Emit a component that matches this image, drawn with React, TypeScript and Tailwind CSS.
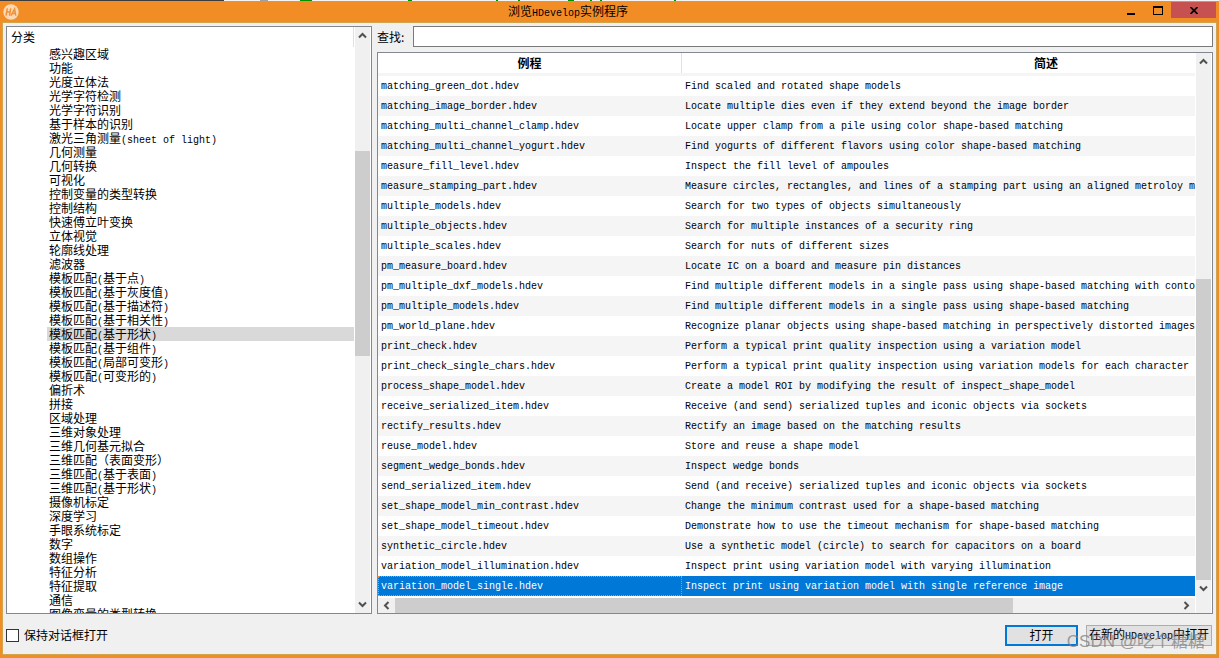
import { Fragment } from "react";
import type { ReactNode } from "react";

const categories = [
  "感兴趣区域", "功能", "光度立体法", "光学字符检测", "光学字符识别", "基于样本的识别",
  "激光三角测量(sheet of light)", "几何测量", "几何转换", "可视化", "控制变量的类型转换",
  "控制结构", "快速傅立叶变换", "立体视觉", "轮廓线处理", "滤波器", "模板匹配(基于点)",
  "模板匹配(基于灰度值)", "模板匹配(基于描述符)", "模板匹配(基于相关性)", "模板匹配(基于形状)",
  "模板匹配(基于组件)", "模板匹配(局部可变形)", "模板匹配(可变形的)", "偏折术", "拼接",
  "区域处理", "三维对象处理", "三维几何基元拟合", "三维匹配（表面变形）", "三维匹配(基于表面)",
  "三维匹配(基于形状)", "摄像机标定", "深度学习", "手眼系统标定", "数字", "数组操作",
  "特征分析", "特征提取", "通信", "图像变量的类型转换",
];
const selectedCategory = "模板匹配(基于形状)";

const examples: [string, string][] = [
  ["matching_green_dot.hdev", "Find scaled and rotated shape models"],
  ["matching_image_border.hdev", "Locate multiple dies even if they extend beyond the image border"],
  ["matching_multi_channel_clamp.hdev", "Locate upper clamp from a pile using color shape-based matching"],
  ["matching_multi_channel_yogurt.hdev", "Find yogurts of different flavors using color shape-based matching"],
  ["measure_fill_level.hdev", "Inspect the fill level of ampoules"],
  ["measure_stamping_part.hdev", "Measure circles, rectangles, and lines of a stamping part using an aligned metroloy model"],
  ["multiple_models.hdev", "Search for two types of objects simultaneously"],
  ["multiple_objects.hdev", "Search for multiple instances of a security ring"],
  ["multiple_scales.hdev", "Search for nuts of different sizes"],
  ["pm_measure_board.hdev", "Locate IC on a board and measure pin distances"],
  ["pm_multiple_dxf_models.hdev", "Find multiple different models in a single pass using shape-based matching with contours"],
  ["pm_multiple_models.hdev", "Find multiple different models in a single pass using shape-based matching"],
  ["pm_world_plane.hdev", "Recognize planar objects using shape-based matching in perspectively distorted images"],
  ["print_check.hdev", "Perform a typical print quality inspection using a variation model"],
  ["print_check_single_chars.hdev", "Perform a typical print quality inspection using variation models for each character"],
  ["process_shape_model.hdev", "Create a model ROI by modifying the result of inspect_shape_model"],
  ["receive_serialized_item.hdev", "Receive (and send) serialized tuples and iconic objects via sockets"],
  ["rectify_results.hdev", "Rectify an image based on the matching results"],
  ["reuse_model.hdev", "Store and reuse a shape model"],
  ["segment_wedge_bonds.hdev", "Inspect wedge bonds"],
  ["send_serialized_item.hdev", "Send (and receive) serialized tuples and iconic objects via sockets"],
  ["set_shape_model_min_contrast.hdev", "Change the minimum contrast used for a shape-based matching"],
  ["set_shape_model_timeout.hdev", "Demonstrate how to use the timeout mechanism for shape-based matching"],
  ["synthetic_circle.hdev", "Use a synthetic model (circle) to search for capacitors on a board"],
  ["variation_model_illumination.hdev", "Inspect print using variation model with varying illumination"],
  ["variation_model_single.hdev", "Inspect print using variation model with single reference image"],
];
const selectedExample = "variation_model_single.hdev";

/* Latin runs are set in the half-width monospace face, the rest in the CJK face. */
function Mixed({ text }: { text: string }) {
  const runs = text.split(/([\x20-\x7e]+)/).filter(Boolean);
  return (
    <>
      {runs.map((run, i) =>
        /^[\x20-\x7e]/.test(run) ? (
          <span key={i} className="font-['Liberation_Mono',monospace] text-[10px]">{run}</span>
        ) : (
          <Fragment key={i}>{run}</Fragment>
        ),
      )}
    </>
  );
}

const chevrons = {
  up: "M1 6.5 4.5 3 8 6.5",
  down: "M1 2.5 4.5 6 8 2.5",
  left: "M6.5 1 3 4.5 6.5 8",
  right: "M2.5 1 6 4.5 2.5 8",
};

function ArrowButton({ dir, label }: { dir: keyof typeof chevrons; label: string }) {
  return (
    <button type="button" aria-label={label} className="flex size-[17px] shrink-0 items-center justify-center">
      <svg viewBox="0 0 9 9" className="size-[9px]" fill="none" stroke="#505050" strokeWidth="2">
        <path d={chevrons[dir]} />
      </svg>
    </button>
  );
}

function WindowButton({ label, className, children }: { label: string; className: string; children: ReactNode }) {
  return (
    <button type="button" aria-label={label} className={className}>
      {children}
    </button>
  );
}

export default function App() {
  return (
    <div className="flex h-screen flex-col overflow-hidden bg-[#f28d25] font-['Noto_Sans_CJK_SC',sans-serif] text-[12px] leading-[14px] text-black">
      <div className="flex h-px shrink-0 bg-[#f4f4f4]">
        <div className="w-56 bg-[#3c3c3c]" />
        <div className="ml-9 w-2 bg-[#a0a0a0]" />
        <div className="ml-8 w-3 bg-[#009000]" />
        <div className="ml-24 w-1 bg-[#009000]" />
        <div className="ml-[84px] w-[2px] bg-[#009000]" />
        <div className="ml-5 w-[2px] bg-[#009000]" />
        <div className="ml-12 w-[6px] bg-[#009000]" />
        <div className="ml-4 w-[2px] bg-[#009000]" />
        <div className="ml-2 w-[2px] bg-[#009000]" />
        <div className="ml-[72px] w-[2px] bg-[#009000]" />
      </div>

      <header className="flex h-[21px] shrink-0 items-start border-t border-[#d49a3c] pr-[3px] pl-[3px]">
        <svg viewBox="0 0 16 16" className="size-4 self-center" aria-label="HALCON">
          <circle cx="8" cy="8" r="7.7" fill="#fbd9b4" />
          <path d="M4.3 4.4 3.1 11.6M7.7 4.4 6.5 11.6M3.4 8h3.8M8 11.6 11.6 5l1.2 6.6M9.4 9.6h3.2" fill="none" stroke="#f0913a" strokeWidth="1.5" />
        </svg>
        <h1 className="flex-1 self-center text-center"><Mixed text="浏览HDevelop实例程序" /></h1>
        <div className="flex">
          <WindowButton label="最小化" className="flex h-4 w-7 items-center justify-center">
            <svg viewBox="0 0 10 10" className="size-[10px]"><path d="M1 8h8v2H1z" /></svg>
          </WindowButton>
          <WindowButton label="最大化" className="flex h-4 w-[26px] items-center justify-center">
            <svg viewBox="0 0 10 9" className="h-[9px] w-[10px]"><path d="M0 0h10v9H0zM1 2v6h8V2z" fillRule="evenodd" /></svg>
          </WindowButton>
          <WindowButton label="关闭" className="flex h-4 w-[45px] items-center justify-center bg-[#c75050]">
            <svg viewBox="0 0 8 7" className="h-[7px] w-2" fill="none" stroke="#000" strokeWidth="1.7"><path d="m.5 0 7 7m0-7-7 7" /></svg>
          </WindowButton>
        </div>
      </header>

      <main className="mx-[2px] mb-[3px] flex min-h-0 flex-1 flex-col border border-[#d2a44c] bg-[#f0f0f0] px-[3px] pt-[3px]">
        <div className="flex min-h-0 flex-1 gap-[5px]">
          <nav className="flex w-[366px] shrink-0 border border-[#828790] bg-white" aria-label="分类">
            <div className="flex min-w-0 flex-1 flex-col">
              <h2 className="h-5 shrink-0 border-r border-[#e0e0e0] pt-[3px] pl-1">分类</h2>
              <ul className="ml-10 min-h-0 flex-1 overflow-hidden">
                {categories.map((name) => (
                  <li
                    key={name}
                    className={
                      name === selectedCategory
                        ? "h-[14px] bg-[#d9d9d9] pl-[2px] whitespace-nowrap"
                        : "h-[14px] pl-[2px] whitespace-nowrap"
                    }
                  >
                    <Mixed text={name} />
                  </li>
                ))}
              </ul>
            </div>
            <div className="mx-px flex w-[15px] shrink-0 flex-col items-center bg-[#f0f0f0]">
              <ArrowButton dir="up" label="向上滚动" />
              <div className="flex-[107]" />
              <div className="w-full flex-[204] bg-[#cdcdcd]" />
              <div className="flex-[240]" />
              <ArrowButton dir="down" label="向下滚动" />
            </div>
          </nav>

          <section className="flex min-w-0 flex-1 flex-col gap-[5px]">
            <div className="flex h-[21px] shrink-0 items-center">
              <label htmlFor="search" className="w-9 shrink-0">查找:</label>
              <input id="search" type="text" className="h-[21px] min-w-0 flex-1 border border-[#7a7a7a] bg-white px-1 outline-none" />
            </div>

            <div className="flex min-h-0 flex-1 border border-[#828790] bg-white">
              <div className="flex min-w-0 flex-1 flex-col">
                <div className="min-h-0 flex-1 overflow-hidden">
                  <table className="w-[1032px] table-fixed border-collapse">
                    <colgroup>
                      <col className="w-[304px]" />
                      <col />
                    </colgroup>
                    <thead>
                      <tr className="bg-[#f5f5f5]">
                        <th className="p-0 pb-[3px] font-bold">
                          <div className="h-5 border-r border-[#e0e0e0] bg-white leading-5">例程</div>
                        </th>
                        <th className="p-0 pb-[3px] font-bold">
                          <div className="h-5 bg-white leading-5">简述</div>
                        </th>
                      </tr>
                    </thead>
                    <tbody className="font-['Liberation_Mono',monospace] text-[10px]">
                      {examples.map(([file, description]) => {
                        const selected = file === selectedExample;
                        return (
                          <tr
                            key={file}
                            className={selected ? "h-5 bg-[#0078d7] text-white" : "h-5 even:bg-[#f5f5f5]"}
                          >
                            <td className="p-0 whitespace-nowrap">
                              <div
                                className={
                                  selected
                                    ? "h-5 border border-dotted border-[#ff8728] pt-[3px] pl-[2px]"
                                    : "h-5 border border-transparent pt-[3px] pl-[2px]"
                                }
                              >
                                {file}
                              </div>
                            </td>
                            <td className="p-0 pt-[2px] pl-[3px] whitespace-nowrap">{description}</td>
                          </tr>
                        );
                      })}
                    </tbody>
                  </table>
                </div>
                <div className="mt-px flex h-[15px] shrink-0 items-center bg-[#f0f0f0]">
                  <ArrowButton dir="left" label="向左滚动" />
                  <div className="h-full flex-[618] bg-[#cdcdcd]" />
                  <div className="flex-[165]" />
                  <ArrowButton dir="right" label="向右滚动" />
                </div>
              </div>
              <div className="mx-px flex w-[15px] shrink-0 flex-col items-center bg-[#f0f0f0] pb-4">
                <ArrowButton dir="up" label="向上滚动" />
                <div className="flex-[209]" />
                <div className="w-full flex-[300] bg-[#cdcdcd]" />
                <ArrowButton dir="down" label="向下滚动" />
              </div>
            </div>
          </section>
        </div>

        <footer className="relative flex h-10 shrink-0 items-center gap-2 pt-[2px] pr-px">
          <label className="mr-auto flex items-center gap-[5px]">
            <input type="checkbox" className="size-[13px] appearance-none border border-[#333] bg-white" />
            保持对话框打开
          </label>
          <button type="button" className="h-[21px] w-[73px] border-2 border-[#0078d7] bg-[#e1e1e1]">打开</button>
          <button type="button" className="h-[21px] w-[126px] border border-[#adadad] bg-[#e1e1e1] whitespace-nowrap">
            <Mixed text="在新的HDevelop中打开" />
          </button>
          <span className="pointer-events-none absolute right-2 bottom-0 font-['Liberation_Sans','Noto_Sans_CJK_SC',sans-serif] text-[17px] leading-6 whitespace-nowrap text-[#808080]/75">
            CSDN @吃个糖糖
          </span>
        </footer>
      </main>
    </div>
  );
}
